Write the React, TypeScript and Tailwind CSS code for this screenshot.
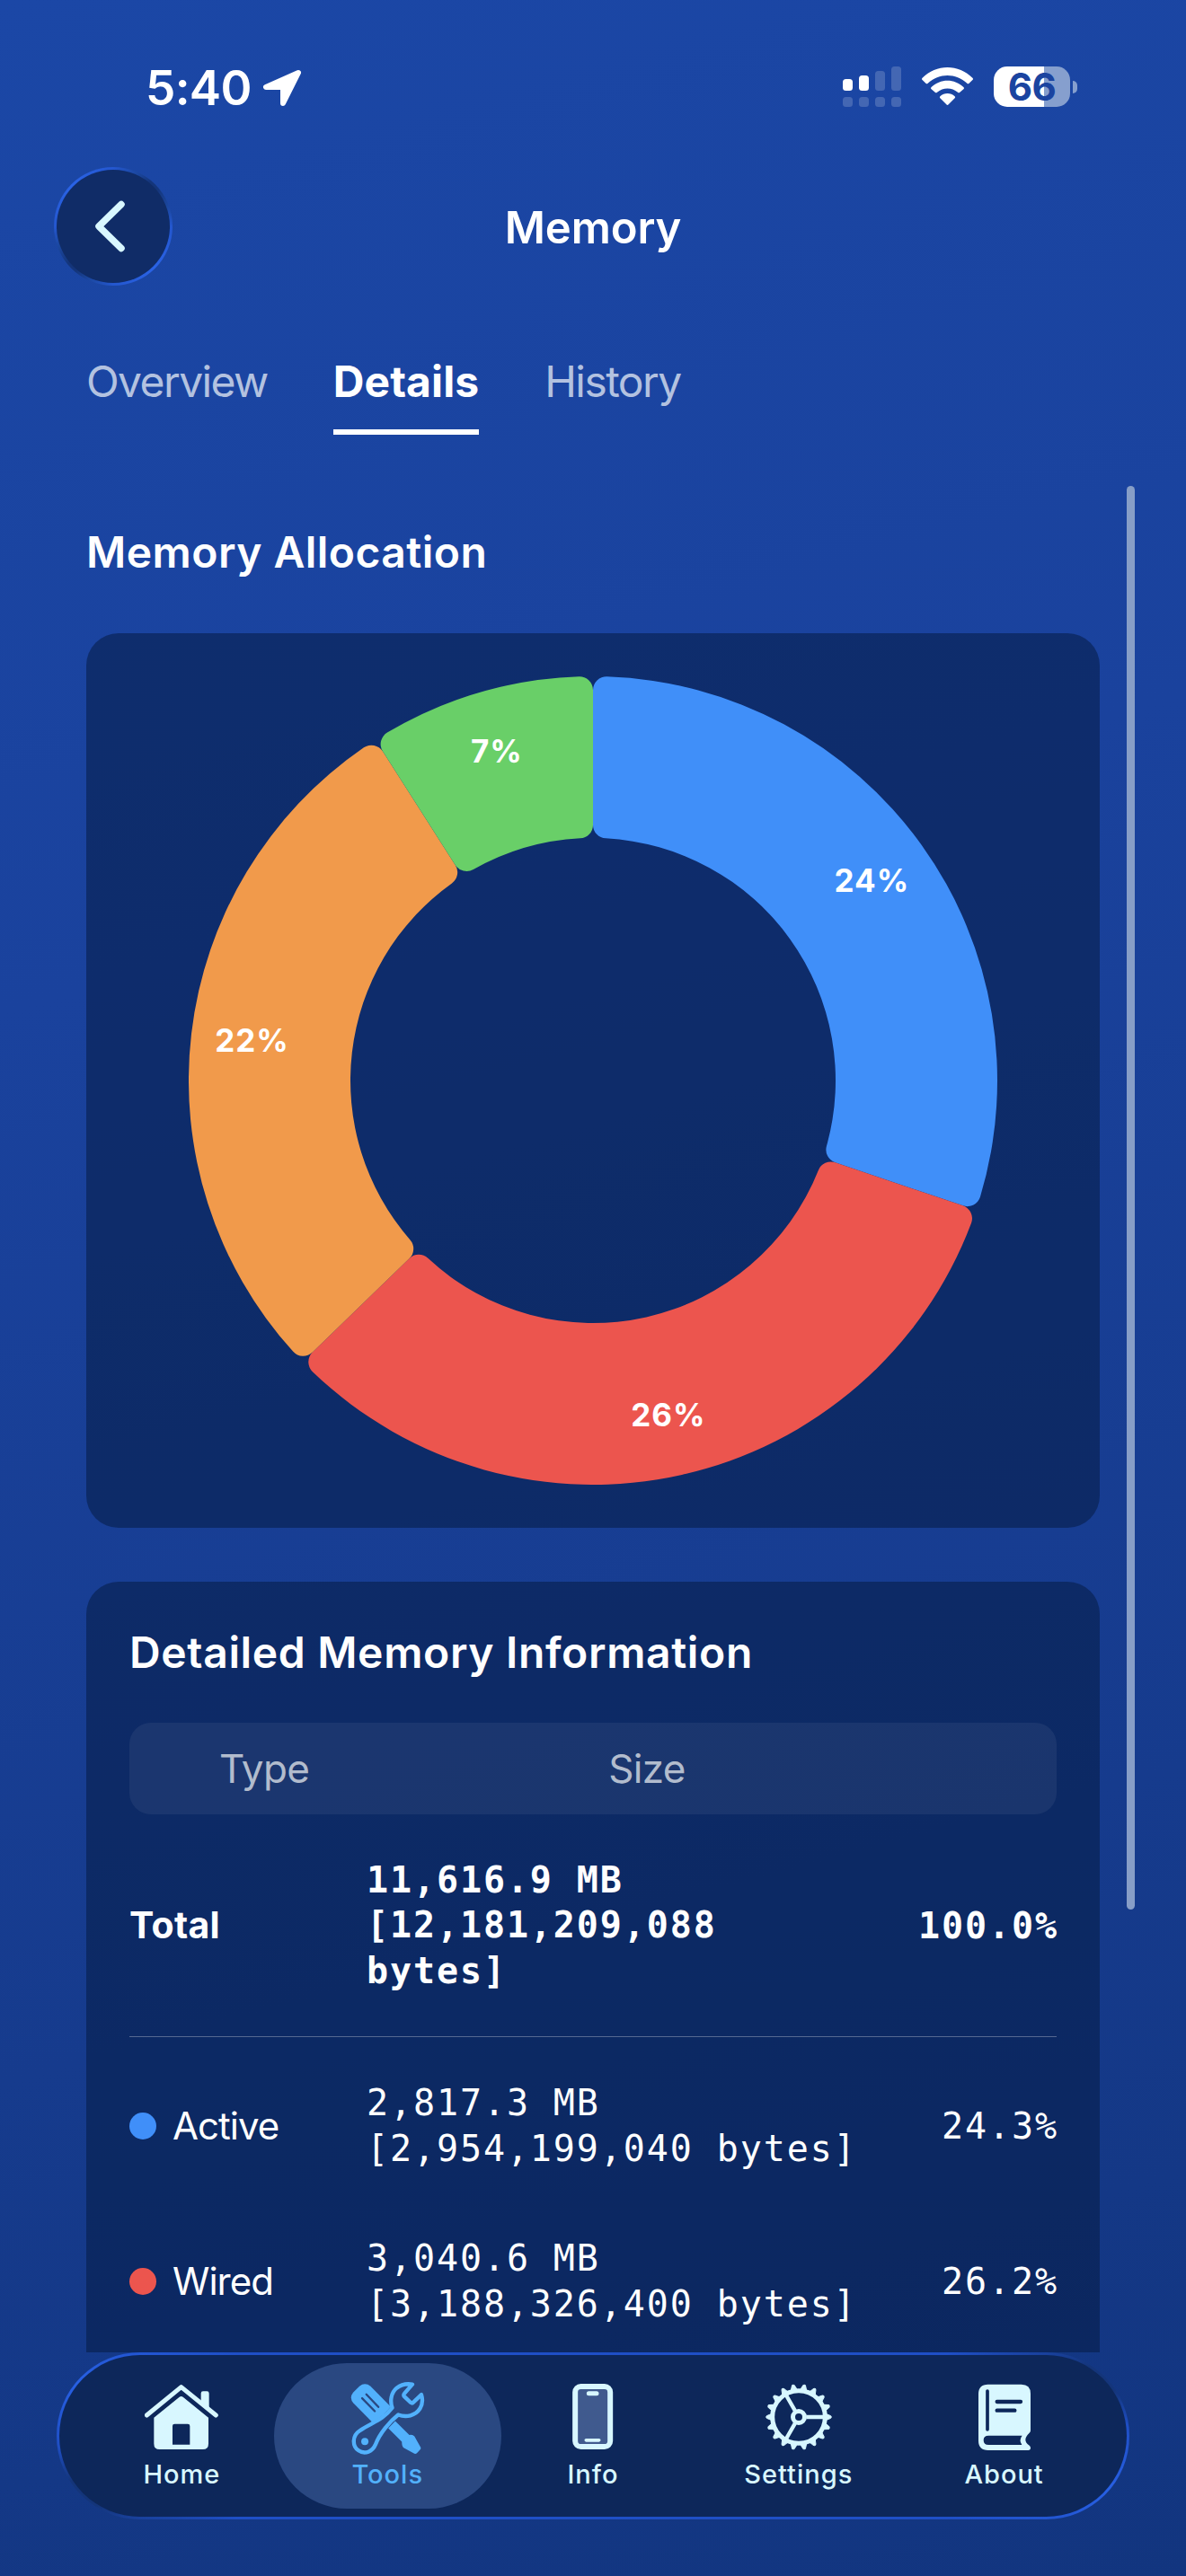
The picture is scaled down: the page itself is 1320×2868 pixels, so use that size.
import { clsx } from 'clsx';
import type { ReactNode } from 'react';

type Slice = { label: string; value: number; color: string };

const slices: Slice[] = [
  { label: '24%', value: 24.3, color: '#408ff9' },
  { label: '26%', value: 26.2, color: '#ec554e' },
  { label: '22%', value: 22.7, color: '#f19a4b' },
  { label: '7%', value: 7.28, color: '#69cf68' },
];

const rows = [
  { name: 'Active', dot: 'bg-[#408ff9]', size: '2,817.3 MB', bytes: '[2,954,199,040 bytes]', percent: '24.3%' },
  { name: 'Wired', dot: 'bg-[#ec554e]', size: '3,040.6 MB', bytes: '[3,188,326,400 bytes]', percent: '26.2%' },
];

const OUTER = 450;
const INNER = 270;
const CORNER = 15;
const LABEL_RADIUS = 382;

// angle is in radians, clockwise from 12 o'clock
const point = (radius: number, angle: number) =>
  `${(radius * Math.sin(angle)).toFixed(2)} ${(-radius * Math.cos(angle)).toFixed(2)}`;

function slicePath(start: number, end: number) {
  const outerOffset = Math.asin(CORNER / (OUTER - CORNER));
  const innerOffset = Math.asin(CORNER / (INNER + CORNER));
  const outerEdge = Math.sqrt((OUTER - CORNER) ** 2 - CORNER ** 2);
  const innerEdge = Math.sqrt((INNER + CORNER) ** 2 - CORNER ** 2);
  const large = end - start > Math.PI ? 1 : 0;
  const corner = `A${CORNER} ${CORNER} 0 0 1`;

  return [
    `M${point(outerEdge, start)}`,
    `${corner} ${point(OUTER, start + outerOffset)}`,
    `A${OUTER} ${OUTER} 0 ${large} 1 ${point(OUTER, end - outerOffset)}`,
    `${corner} ${point(outerEdge, end)}`,
    `L${point(innerEdge, end)}`,
    `${corner} ${point(INNER, end - innerOffset)}`,
    `A${INNER} ${INNER} 0 ${large} 0 ${point(INNER, start + innerOffset)}`,
    `${corner} ${point(innerEdge, start)}`,
    'Z',
  ].join(' ');
}

function DonutChart() {
  const total = slices.reduce((sum, slice) => sum + slice.value, 0);
  let angle = 0;

  return (
    <svg viewBox="-450 -450 900 900" className="size-[900px]">
      {slices.map((slice) => {
        const start = angle;
        const end = start + (slice.value / total) * Math.PI * 2;
        const middle = (start + end) / 2;
        angle = end;
        return (
          <g key={slice.label}>
            <path d={slicePath(start, end)} fill={slice.color} />
            <text
              x={LABEL_RADIUS * Math.sin(middle)}
              y={-LABEL_RADIUS * Math.cos(middle) + 12.5}
              textAnchor="middle"
              className="fill-white text-[35px] font-bold tracking-[1px]"
            >
              {slice.label}
            </text>
          </g>
        );
      })}
    </svg>
  );
}

function StatusBar() {
  return (
    <div className="flex h-[150px] items-start justify-between pt-[74px] pr-[121px] pl-[162px]">
      <div className="flex h-[48px] items-center gap-[12px]">
        <span className="text-[53px] leading-[48px] font-semibold tracking-[-0.7px]">5:40</span>
        <svg viewBox="291 77 44 42" className="h-[42px] w-[44px]">
          <path d="M331 81L295 97H314V115Z" fill="white" stroke="white" strokeWidth="6" strokeLinejoin="round" />
        </svg>
      </div>
      <div className="flex items-start gap-[23px]">
        <svg viewBox="0 0 65 45" className="h-[45px] w-[65px]" fill="white">
          <rect x="0" y="14" width="11" height="13" rx="3.5" />
          <rect x="18" y="10" width="11" height="17" rx="3.5" />
          <g opacity="0.18">
            <rect x="36" y="5" width="11" height="22" rx="3.5" />
            <rect x="54" y="0" width="11" height="27" rx="3.5" />
            <rect x="0" y="34" width="11" height="11" rx="3.5" />
            <rect x="18" y="34" width="11" height="11" rx="3.5" />
            <rect x="36" y="34" width="11" height="11" rx="3.5" />
            <rect x="54" y="34" width="11" height="11" rx="3.5" />
          </g>
        </svg>
        {/* drawn on a 3x grid */}
        <svg viewBox="315 42 171 135" className="h-[45px] w-[57px]" fill="white">
          <path d="M316 81C363 33 438 33 485 81Q487 84 485 86L472 99Q469 101 466 98C429 63 372 63 335 98Q332 101 329 99L316 86Q314 84 316 81Z" />
          <path d="M346 112C377 82 424 82 455 112Q457 115 455 117L441 129Q438 131 435 128C415 111 386 111 366 128Q363 131 360 129L346 117Q344 115 346 112Z" />
          <path d="M376 142C390 129 411 129 425 142Q428 145 425 148L404 169Q400 173 397 169L376 148Q373 145 376 142Z" />
        </svg>
        <div className="flex items-center gap-[3px]">
          <div className="flex h-[45px] w-[85px] items-center justify-center rounded-[15px] bg-[linear-gradient(90deg,#fff_56px,#869fce_56px)]">
            <span className="text-[42px] leading-[45px] font-bold tracking-[-0.5px] text-[#1b44a0]">66</span>
          </div>
          <div className="h-[14px] w-[5px] rounded-r-full bg-[#869fce]" />
        </div>
      </div>
    </div>
  );
}

function Header() {
  return (
    <div className="flex h-[204px] items-center justify-between px-[60px]">
      <button className="size-[132px] rounded-full bg-[conic-gradient(#2457cf_0deg,#1b479f_25deg,#14357a_40deg,#14357a_50deg,#1b479f_70deg,#2457cf_90deg,#2a63e6_135deg,#2457cf_180deg,#1b479f_205deg,#14357a_220deg,#14357a_230deg,#1b479f_250deg,#2457cf_270deg,#2a63e6_315deg,#2457cf_360deg)] p-[3px]">
        <span className="flex size-full items-center justify-center rounded-full bg-[#102c67]">
          <svg viewBox="0 0 34 58" className="mr-[9px] h-[58px] w-[34px]">
            <path d="M30 4.5L5 29L30 53.5" fill="none" stroke="#d8f7ff" strokeWidth="7.5" strokeLinecap="round" strokeLinejoin="round" />
          </svg>
        </span>
      </button>
      <h1 className="mt-[3px] text-[49px] leading-[60px] font-semibold tracking-[-0.1px]">Memory</h1>
      <div className="w-[132px]" />
    </div>
  );
}

function Tab({ children, active }: { children: ReactNode; active?: boolean }) {
  return (
    <button className="flex flex-col items-start">
      <span
        className={clsx(
          'text-[48px] leading-[60px]',
          active ? 'font-bold tracking-[0.1px] text-white' : 'tracking-[-1.6px] text-[#b3c2e0]',
        )}
      >
        {children}
      </span>
      <span className={clsx('mt-[23px] h-[6px] w-full', active && 'bg-white')} />
    </button>
  );
}

function HomeIcon() {
  return (
    <svg viewBox="366 156 246 240" className="h-[80px] w-[82px]" fill="#d8f7ff">
      <path d="M373 267L488 173L604 267" fill="none" stroke="#d8f7ff" strokeWidth="15" strokeLinecap="round" strokeLinejoin="round" />
      <path d="M554 224V194Q554 187 561 187H574Q581 187 581 194V246Z" />
      <path
        fillRule="evenodd"
        d="M397 275L482 206Q488 202 494 206L579 275V362Q579 381 560 381H416Q397 381 397 362ZM466 296Q459 296 459 303V365H517V303Q517 296 510 296Z"
      />
    </svg>
  );
}

function ToolsIcon() {
  return (
    <svg viewBox="1048 154 248 242" className="h-[81px] w-[83px]" fill="#52b1fc">
      <g>
        <path d="M1057 189L1078 168Q1096 154 1115 168L1182 236Q1160 265 1122 289L1058 224Q1043 207 1057 189Z" />
        <path d="M1087 208L1129 251M1101 195L1141 237" stroke="#2a4881" strokeWidth="7" strokeLinecap="round" />
      </g>
      <path d="M1197 284L1244 330Q1256 328 1261 335L1282 372Q1283 376 1280 379L1269 391Q1264 395 1258 391L1225 373Q1219 369 1219 353L1174 308Z" />
      <path
        d="M1254 162Q1224 157 1202 174C1183 190 1179 217 1187 240C1155 282 1120 288 1079 316C1054 332 1053 367 1075 382C1097 397 1122 384 1131 363C1145 325 1180 284 1207 263C1234 273 1264 266 1279 243Q1292 222 1284 196L1258 221Q1254 226 1248 222L1228 203Q1223 198 1228 192Z"
        fill="none"
        stroke="#52b1fc"
        strokeWidth="13"
        strokeLinejoin="round"
      />
      <circle cx="1096" cy="352" r="12" />
    </svg>
  );
}

function InfoIcon() {
  return (
    <svg viewBox="585 156 140 240" className="h-[80px] w-[47px]">
      <rect x="597" y="171" width="117" height="201" rx="19" fill="#405a8e" stroke="#d8f7ff" strokeWidth="18" />
      <rect x="635" y="187" width="41" height="15" rx="7.5" fill="#d8f7ff" />
      <rect x="628" y="345" width="54" height="11" rx="5.5" fill="#d8f7ff" />
    </svg>
  );
}

function SettingsIcon() {
  return (
    <svg viewBox="-114 -117 228 240" className="h-[80px] w-[76px]" stroke="#d8f7ff" fill="none">
      {Array.from({ length: 18 }, (_, i) => (
        <path key={i} d="M90 -11L107 -4Q111 0 107 4L90 11Z" transform={`rotate(${i * 20})`} fill="#d8f7ff" strokeWidth="3" strokeLinejoin="round" />
      ))}
      <circle r="88" strokeWidth="15" />
      <circle r="19.5" strokeWidth="15" />
      <path d="M25 0H84M-12.5 21.6L-42 72.7M-12.5 -21.6L-42 -72.7" strokeWidth="13" />
    </svg>
  );
}

function AboutIcon() {
  return (
    <svg viewBox="627 156 180 240" className="h-[80px] w-[60px]">
      <path
        fill="#d8f7ff"
        d="M662 164H773Q804 164 804 195V318Q804 323 800 326Q787 338 787 349Q787 360 800 368Q804 371 804 376Q804 384 796 384H662Q630 384 630 352V196Q630 164 662 164Z"
      />
      <path fill="#0d275a" d="M664 335H776Q764 350 775 366H664Q647 366 647 350Q647 335 664 335Z" />
      <path d="M660 186V315" stroke="#0d275a" strokeWidth="11" strokeLinecap="round" />
      <path d="M692 222H771M692 251H751" stroke="#0d275a" strokeWidth="13" strokeLinecap="round" />
    </svg>
  );
}

const navItems = [
  { label: 'Home', icon: <HomeIcon /> },
  { label: 'Tools', icon: <ToolsIcon />, active: true },
  { label: 'Info', icon: <InfoIcon /> },
  { label: 'Settings', icon: <SettingsIcon /> },
  { label: 'About', icon: <AboutIcon /> },
];

function BottomNav() {
  return (
    <nav className="mx-[63px] mb-[63px] h-[186px] shrink-0 rounded-full bg-[conic-gradient(#1f4fc6_0deg,#1f4fc6_77deg,#14357a_82deg,#14357a_85deg,#1f4fc6_89deg,#2860e4_96deg,#1f4fc6_103deg,#1f4fc6_257deg,#14357a_262deg,#14357a_265deg,#1f4fc6_269deg,#2860e4_276deg,#1f4fc6_283deg,#1f4fc6_360deg)] p-[3px]">
      <div className="flex h-full rounded-full bg-[#0d275a] px-[22px]">
        {navItems.map((item) => (
          <button key={item.label} className="relative flex flex-1 flex-col items-center pt-[30px]">
            {item.active && <span className="absolute -inset-x-[12px] top-[9px] h-[162px] rounded-full bg-[#2a4881]" />}
            <span className="relative flex h-[80px] items-center">{item.icon}</span>
            <span
              className={clsx(
                'relative mt-[5px] text-[29px] leading-[36px] font-medium tracking-[1px]',
                item.active ? 'text-[#52b1fc]' : 'text-[#d8f7ff]',
              )}
            >
              {item.label}
            </span>
          </button>
        ))}
      </div>
    </nav>
  );
}

function MemoryTable() {
  return (
    <section className="mt-[60px] h-[1100px] rounded-[36px] bg-[#051c44]/55 px-[48px] pt-[49px]">
      <h2 className="text-[48px] leading-[60px] font-semibold tracking-[0.65px]">Detailed Memory Information</h2>
      <div className="mt-[48px] flex h-[102px] items-center rounded-[24px] bg-white/6 text-[44px] tracking-[-0.7px] text-[#b2bccd]">
        <span className="w-[300px] text-center">Type</span>
        <span className="w-[552px] text-center">Size</span>
      </div>
      <div className="flex h-[247px] items-center">
        <span className="w-[264px] text-[41px] font-bold tracking-[0.3px]">Total</span>
        <span className="w-[570px] font-[DejaVu_Sans_Mono,monospace] text-[40px] leading-[50.6px] font-bold tracking-[1.9px]">
          11,616.9 MB
          <br />
          [12,181,209,088
          <br />
          bytes]
        </span>
        <span className="-mr-[2px] ml-auto font-[DejaVu_Sans_Mono,monospace] text-[40px] font-bold tracking-[1.9px]">100.0%</span>
      </div>
      <div className="mb-[12px] h-px bg-white/30" />
      {rows.map((row) => (
        <div key={row.name} className="flex h-[173px] items-center">
          <div className="flex w-[264px] items-center gap-[18px]">
            <span className={clsx('size-[30px] rounded-full', row.dot)} />
            <span className="text-[42px] tracking-[-1px]">{row.name}</span>
          </div>
          <div className="font-[DejaVu_Sans_Mono,monospace] text-[40px] leading-[51px] tracking-[1.9px]">
            <p>{row.size}</p>
            <p>{row.bytes}</p>
          </div>
          <span className="-mr-[2px] ml-auto font-[DejaVu_Sans_Mono,monospace] text-[40px] tracking-[1.9px]">{row.percent}</span>
        </div>
      ))}
    </section>
  );
}

export default function App() {
  return (
    <div className="flex h-[2868px] w-[1320px] flex-col overflow-hidden bg-[linear-gradient(165deg,#1b47a6,#1a429d_35%,#163b8d_72%,#12357f)] font-[Inter,sans-serif] text-white">
      <StatusBar />
      <Header />
      <div className="flex shrink-0 gap-[73px] px-[96px] pt-[41px]">
        <Tab>Overview</Tab>
        <Tab active>Details</Tab>
        <Tab>History</Tab>
      </div>
      <main className="relative min-h-0 flex-1 overflow-hidden px-[96px] pt-[101px]">
        <h2 className="text-[48px] leading-[60px] font-semibold tracking-[0.45px]">Memory Allocation</h2>
        <section className="mt-[60px] flex h-[996px] items-center justify-center rounded-[36px] bg-[#051c44]/55">
          <DonutChart />
        </section>
        <MemoryTable />
        <div className="absolute top-[57px] right-[57px] h-[1585px] w-[9px] rounded-full bg-[#879ec7]" />
      </main>
      <BottomNav />
    </div>
  );
}
